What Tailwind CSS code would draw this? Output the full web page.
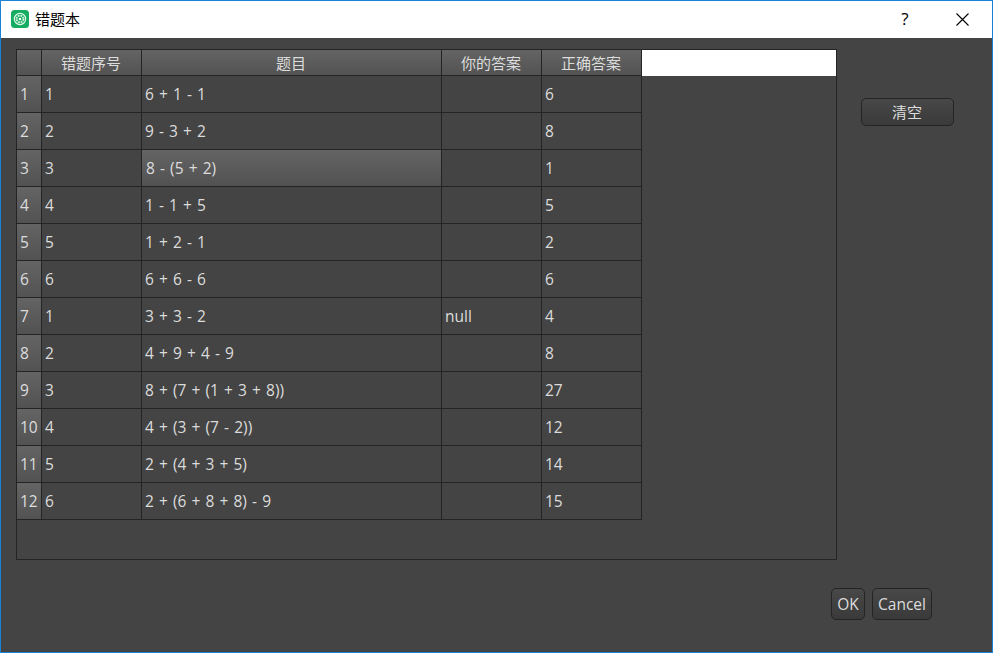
<!DOCTYPE html>
<html lang="zh-CN">
<head>
<meta charset="utf-8">
<title>错题本</title>
<script src="https://cdn.jsdelivr.net/npm/@tailwindcss/browser@4"></script>
</head>
<body class="font-['Open_Sans','Noto_Sans_CJK_SC',sans-serif]">
<div class="flex h-[653px] w-[993px] flex-col overflow-hidden border border-[#1883d7] bg-[#444444] text-[15px] leading-5 text-[#dcdcdc]">
  <header class="flex h-[37px] shrink-0 items-center bg-white pl-2.5 text-black">
    <svg class="mr-1.5 mb-px size-[18px]" viewBox="0 0 18 18" fill="none">
      <rect width="18" height="18" rx="3.5" fill="#16ad62"/>
      <circle cx="9" cy="9" r="5.6" stroke="#e4f8ec" stroke-width="1.2"/>
      <circle cx="9" cy="9" r="3.4" stroke="#d3f2df" stroke-width="1.8" stroke-dasharray="1.9 .77"/>
      <circle cx="9" cy="9" r="1.3" fill="#ffffff"/>
    </svg>
    <h1 class="pb-0.5 text-[15px]">错题本</h1>
    <div class="ml-auto flex items-center">
      <button class="flex h-[37px] w-[57px] items-center justify-center pb-0.5 pl-px" aria-label="帮助">
        <span class="text-[17px]">?</span>
      </button>
      <button class="flex h-[37px] w-[59px] items-center justify-center" aria-label="关闭">
        <svg class="size-[13px]" viewBox="0 0 13 13" stroke="#000" stroke-width="1.1"><path d="M.5 .5l12 12M12.5 .5l-12 12"/></svg>
      </button>
    </div>
  </header>
  <main class="flex pt-[11px] pl-[15px]">
    <section class="h-[511px] w-[821px] border border-[#242424]">
      <div class="flex h-[26px] bg-white">
        <div class="grid h-[26px] w-[625px] grid-cols-[25px_100px_300px_100px_100px] bg-linear-to-b from-[#646464] to-[#525252] text-center leading-[23px] *:border-r *:border-b *:border-[#242424] *:pt-0.5 *:pr-px">
          <div></div><div>错题序号</div><div>题目</div><div>你的答案</div><div>正确答案</div>
        </div>
      </div>
      <div id="rows" class="w-[625px] text-[15.5px] [word-spacing:1.1px]"></div>
    </section>
    <button class="mt-[49px] ml-6 flex h-7 w-[93px] items-center justify-center rounded-[5px] border border-[#242424] bg-linear-to-b from-[#484848] to-[#3a3a3a] pr-px">清空</button>
  </main>
  <footer class="mt-7 flex justify-end gap-[7px] pr-[60px] text-[15.5px]">
    <button class="flex h-8 w-[34px] items-center justify-center rounded-[5px] border border-[#242424] bg-linear-to-b from-[#484848] to-[#3a3a3a]">OK</button>
    <button class="flex h-8 w-[60px] items-center justify-center rounded-[5px] border border-[#242424] bg-linear-to-b from-[#484848] to-[#3a3a3a]">Cancel</button>
  </footer>
</div>
<script>
const data = [
  ['1', '6 + 1 - 1', '', '6'],
  ['2', '9 - 3 + 2', '', '8'],
  ['3', '8 - (5 + 2)', '', '1'],
  ['4', '1 - 1 + 5', '', '5'],
  ['5', '1 + 2 - 1', '', '2'],
  ['6', '6 + 6 - 6', '', '6'],
  ['1', '3 + 3 - 2', 'null', '4'],
  ['2', '4 + 9 + 4 - 9', '', '8'],
  ['3', '8 + (7 + (1 + 3 + 8))', '', '27'],
  ['4', '4 + (3 + (7 - 2))', '', '12'],
  ['5', '2 + (4 + 3 + 5)', '', '14'],
  ['6', '2 + (6 + 8 + 8) - 9', '', '15'],
];
const selected = 2;
const shaded = 'bg-linear-to-b from-[#646464] to-[#525252]';
document.getElementById('rows').innerHTML = data.map((r, i) => `
  <div class="grid h-[37px] grid-cols-[25px_100px_300px_100px_100px] leading-[36px] whitespace-nowrap *:border-r *:border-b *:border-[#242424]">
    <div class="pl-[3px] ${shaded}">${i + 1}</div>
    ${r.map((c, j) => `<div class="${i === selected && j === 1 ? shaded + ' pl-1' : 'pl-[3px]'}">${c}</div>`).join('')}
  </div>`).join('');
</script>
</body>
</html>
